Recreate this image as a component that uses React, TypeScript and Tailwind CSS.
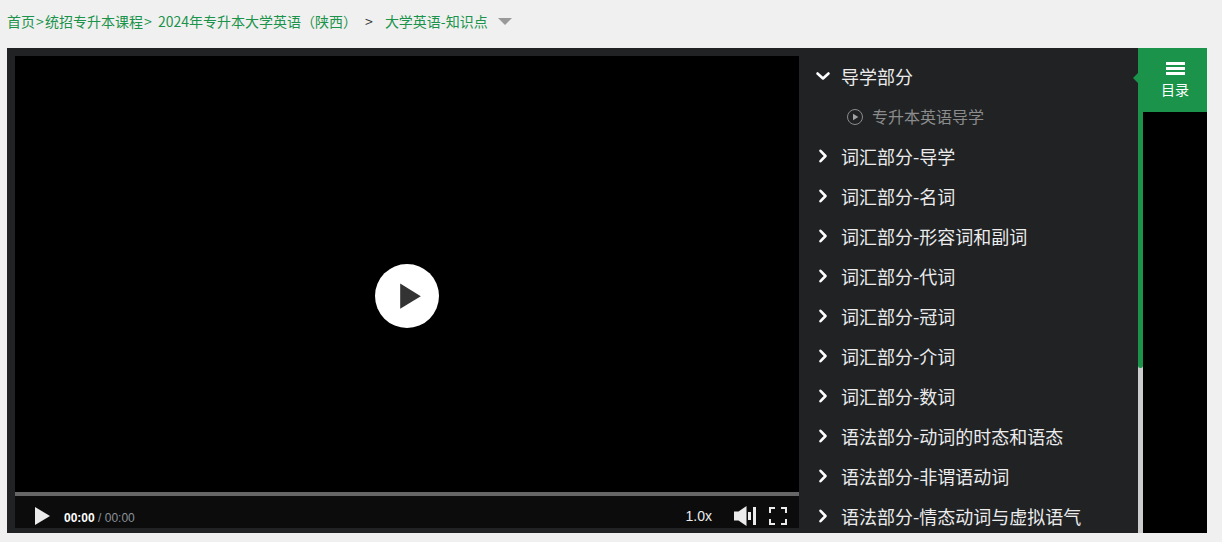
import { useState } from "react";

const chapters = [
  { title: "导学部分", lessons: ["专升本英语导学"] },
  { title: "词汇部分-导学", lessons: [] },
  { title: "词汇部分-名词", lessons: [] },
  { title: "词汇部分-形容词和副词", lessons: [] },
  { title: "词汇部分-代词", lessons: [] },
  { title: "词汇部分-冠词", lessons: [] },
  { title: "词汇部分-介词", lessons: [] },
  { title: "词汇部分-数词", lessons: [] },
  { title: "语法部分-动词的时态和语态", lessons: [] },
  { title: "语法部分-非谓语动词", lessons: [] },
  { title: "语法部分-情态动词与虚拟语气", lessons: [] },
];

function Chevron({ open }: { open: boolean }) {
  return (
    <svg viewBox="0 0 16 16" className="size-4 shrink-0" fill="none" stroke="#fff" strokeWidth="2.6" strokeLinecap="round" strokeLinejoin="round">
      <path d={open ? "M2.5 5.5 8 10.5 13.5 5.5" : "M5.5 2.8 10.5 8 5.5 13.2"} />
    </svg>
  );
}

function Breadcrumb() {
  return (
    <nav className="flex h-12 shrink-0 items-center px-[7px] pb-[6px] text-sm text-[#1b934b]">
      <a href="#home">首页</a>
      <span className="w-[10px] text-center">&gt;</span>
      <a href="#courses">统招专升本课程</a>
      <span className="w-[10px] text-center">&gt;</span>
      <a href="#course" className="ml-[5px]">2024年专升本大学英语（陕西）</a>
      <span className="ml-2 text-[#333]">&gt;</span>
      <a href="#points" className="ml-3">大学英语-知识点</a>
      <svg viewBox="0 0 14 7" className="ml-[10px] h-[7px] w-[14px]">
        <path d="M0 0h14L7 7z" fill="#999" />
      </svg>
    </nav>
  );
}

function Player() {
  return (
    <section className="flex min-w-0 flex-1 flex-col bg-black font-['Liberation_Sans',sans-serif]">
      <div className="flex min-h-0 flex-1 items-center justify-center pt-11">
        <button aria-label="播放视频" className="flex size-16 items-center justify-center rounded-full bg-white">
          <svg viewBox="0 0 64 64" className="size-16">
            <path d="M25.2 19.5v25.3L45.8 32.2z" fill="#333" />
          </svg>
        </button>
      </div>
      <div className="h-1 shrink-0 bg-[#666]" />
      <div className="flex h-8 shrink-0 items-center bg-[#0c0c0c] pt-2 pr-3 pl-5 text-[#ebebeb]">
        <button aria-label="播放">
          <svg viewBox="0 0 15 18" className="h-[18px] w-[15px]">
            <path d="M0 0v18L15 9z" fill="#ebebeb" />
          </svg>
        </button>
        <div className="ml-[14px] pt-1 text-xs text-[#8b929b]">
          <span className="font-bold text-white">00:00</span> / 00:00
        </div>
        <button className="ml-auto text-sm">1.0x</button>
        <button aria-label="音量" className="ml-[22px]">
          <svg viewBox="0 0 22 20" className="h-5 w-[22px]" fill="#ebebeb">
            <path d="M0 5.5h4.5L12.5 0v20L4.5 14.5H0zM14 6h3v8h-3zM19 1h3v18h-3z" />
          </svg>
        </button>
        <button aria-label="全屏" className="ml-[13px]">
          <svg viewBox="0 0 18 18" className="size-[18px]" fill="none" stroke="#ebebeb" strokeWidth="2">
            <path d="M1 6V1h5M12 1h5v5M17 12v5h-5M6 17H1v-5" />
          </svg>
        </button>
      </div>
    </section>
  );
}

export default function App() {
  const [openIndex, setOpenIndex] = useState(0);
  const [showCatalog, setShowCatalog] = useState(true);

  return (
    <div className="flex h-screen flex-col bg-[#f0f0f0] font-['Noto_Sans_CJK_SC',sans-serif]">
      <Breadcrumb />
      <main className="mr-[15px] mb-[9px] ml-[7px] flex min-h-0 flex-1 bg-[#202224]">
        <div className="flex min-w-0 flex-1 pt-2 pb-[5px] pl-2">
          <Player />
        </div>

        {showCatalog && (
          <aside className="relative w-[339px] shrink-0">
            <ul className="h-full overflow-y-auto pt-2 pl-4 [scrollbar-width:none]">
              {chapters.map((chapter, i) => (
                <li key={chapter.title}>
                  <button
                    onClick={() => setOpenIndex(openIndex === i ? -1 : i)}
                    aria-expanded={openIndex === i}
                    className="flex h-10 w-full items-center gap-[10px] text-left text-lg text-[#ececec]"
                  >
                    <Chevron open={openIndex === i} />
                    {chapter.title}
                  </button>
                  {openIndex === i &&
                    chapter.lessons.map((lesson) => (
                      <a key={lesson} href="#lesson" className="flex h-10 items-center gap-2 pl-8 text-base text-[#8c8c8c]">
                        <svg viewBox="0 0 17 17" className="size-[17px]">
                          <circle cx="8" cy="9" r="7.5" fill="none" stroke="#8c8c8c" />
                          <path d="M6 5.8v6.4L11.3 9z" fill="#a3a3a3" />
                        </svg>
                        {lesson}
                      </a>
                    ))}
                </li>
              ))}
            </ul>
            <svg viewBox="0 0 5 10" className="absolute top-[25px] right-0 h-[10px] w-[5px]">
              <path d="M5 0v10L0 5z" fill="#1b934b" />
            </svg>
          </aside>
        )}

        {/* scroll track */}
        <div className="w-[5px] shrink-0 bg-[#ccc]">
          <div className="h-[66%] rounded-b-sm bg-[#1b934b]" />
        </div>
        <div className="w-16 shrink-0 bg-black">
          <button
            onClick={() => setShowCatalog(!showCatalog)}
            className="flex h-16 w-full flex-col items-center bg-[#1b934b] pt-[14px] text-sm text-white"
          >
            <svg viewBox="0 0 19 13" className="h-[13px] w-[19px]" fill="#fff">
              <path d="M0 0h19v3H0zM0 5h19v3H0zM0 10h19v3H0z" />
            </svg>
            <span className="mt-1 leading-5">目录</span>
          </button>
        </div>
      </main>
    </div>
  );
}
